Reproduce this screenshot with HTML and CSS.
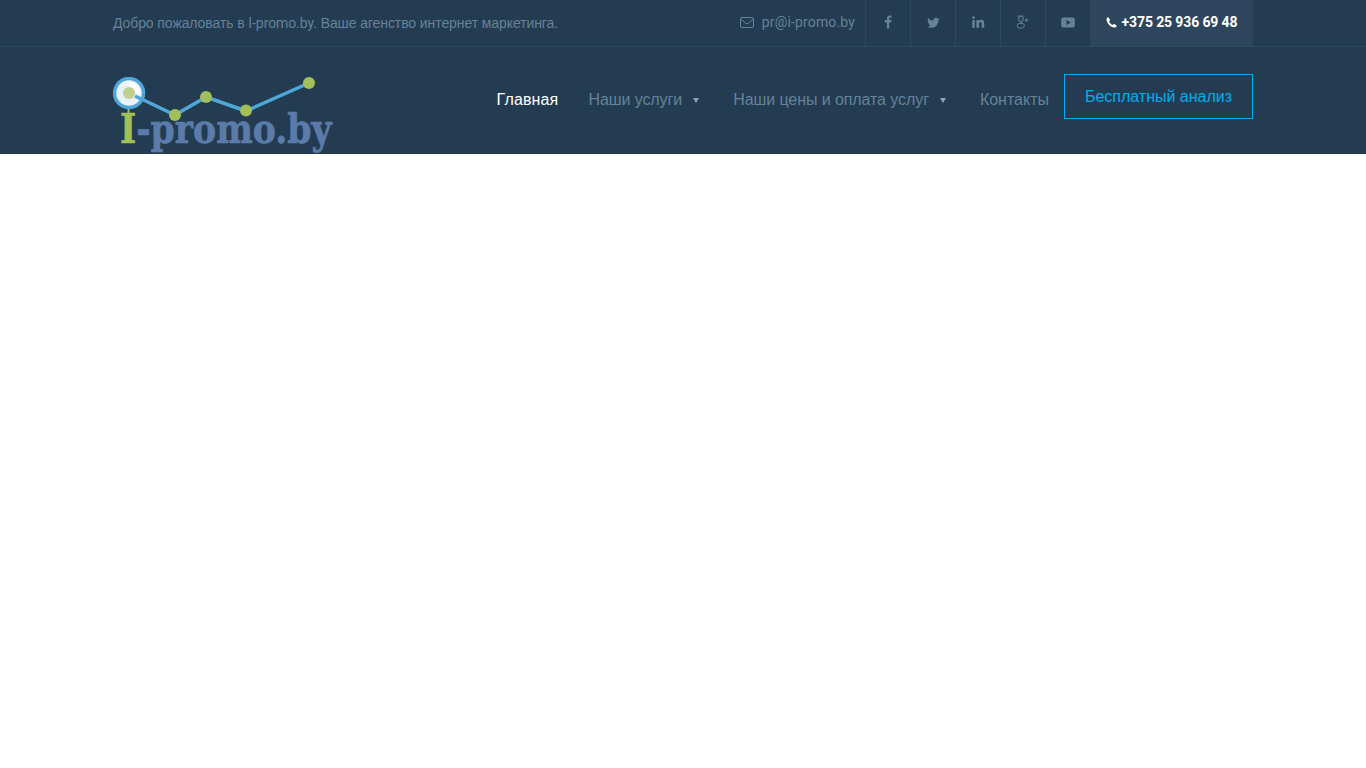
FILE: index.html
```html
<!DOCTYPE html>
<html lang="ru">
<head>
<meta charset="utf-8">
<title>I-promo.by</title>
<link rel="stylesheet" href="styles.css">
</head>
<body>
<header class="site-header">
  <div class="topbar">
    <div class="container topbar-inner">
      <p class="welcome">Добро пожаловать в <span class="latin">I-promo.by.</span> Ваше агенство интернет маркетинга.</p>
      <div class="top-right">
        <a class="mail" href="#">
          <svg class="mail-icon" viewBox="0 0 14 11" width="14" height="11"><rect x="0.5" y="0.5" width="13" height="10" rx="1.5" fill="none" stroke="currentColor"/><path d="M0.8 2.2 L5.6 6.2 Q7 7.3 8.4 6.2 L13.2 2.2" fill="none" stroke="currentColor"/></svg>
          <span>pr@i-promo.by</span>
        </a>
        <a class="social" href="#"><svg viewBox="0 0 8 14" width="8" height="14"><path fill="currentColor" d="M5.2 13.500V7.400h2l.3-2.300H5.200V3.700c0-.6.2-1.100 1.100-1.100h1.300V.6C7.300.5 6.600.5 5.800.5 4.100.5 2.900 1.500 2.900 3.400v1.700H.8v2.300h2.100v6.100z"/></svg></a>
        <a class="social" href="#"><svg viewBox="0 0 14 12" width="13" height="11"><path fill="currentColor" d="M13.800 1.900c-.5.2-1 .4-1.600.4.600-.3 1-.9 1.200-1.500-.5.300-1.100.6-1.800.7C11.100 1 10.400.7 9.600.7 8.100.7 6.800 2 6.800 3.500c0 .2 0 .4.100.6C4.600 4 2.500 2.900 1.100 1.200.9 1.600.7 2.100.7 2.600c0 1 .5 1.800 1.200 2.300-.4 0-.9-.1-1.200-.3v0c0 1.400 1 2.500 2.200 2.800-.2.100-.5.100-.7.100-.2 0-.4 0-.5-.1.300 1.100 1.400 1.900 2.600 2-1 .7-2.100 1.200-3.400 1.200H0c1.200.8 2.700 1.200 4.300 1.200 5.200 0 8-4.300 8-8v-.4c.6-.4 1.100-.9 1.500-1.500z"/></svg></a>
        <a class="social" href="#"><svg viewBox="0 0 13 12" width="13" height="12"><path fill="currentColor" d="M.3 4h2.500v7.700H.3zM1.550.3c.8 0 1.400.6 1.400 1.300s-.6 1.300-1.400 1.300S.15 2.300.15 1.600 .75.300 1.550.3zM4.400 4h2.400v1.100c.4-.7 1.200-1.300 2.400-1.300 2.500 0 3 1.600 3 3.700v4.200H9.700V8c0-.9 0-2-1.200-2s-1.500 1-1.500 1.900v3.800H4.400z"/></svg></a>
        <a class="social" href="#"><svg viewBox="0 0 14 14" width="14" height="14"><g fill="none" stroke="currentColor" stroke-width="1"><ellipse cx="5" cy="4" rx="2.300" ry="3"/><ellipse cx="4.800" cy="10.700" rx="3.700" ry="2.500"/><path d="M5.700 7 Q4 8 6 9"/><path d="M1.600 1.100h5.600M10.500 3.500v3.400M8.800 5.200h3.400"/></g></svg></a>
        <a class="social" href="#"><svg viewBox="0 0 14 11" width="14" height="11"><path fill="currentColor" fill-rule="evenodd" d="M2.200.5h9.600c1.100 0 2 .9 2 2v6c0 1.100-.9 2-2 2H2.200c-1.100 0-2-.9-2-2v-6c0-1.100.9-2 2-2zM5.500 3v5l4.300-2.500z"/></svg></a>
        <a class="phone" href="#">
          <svg viewBox="0 0 12 12" width="11" height="11"><path fill="currentColor" d="M2.700.6 4.300 3c.2.300.2.600-.1.900L3.300 4.800c.7 1.500 2.300 3.200 3.900 3.900l.9-.9c.3-.3.600-.3.900-.1l2.400 1.600c.3.200.4.600.2.900-.5.900-1.300 1.400-2.300 1.300C4.900 11.100.9 7 .6 2.700.5 1.700 1 .9 1.800.4c.3-.2.700-.1.900.2z"/></svg>
          <span>+375 25 936 69 48</span>
        </a>
      </div>
    </div>
  </div>
  <div class="container mainbar">
    <a class="logo" href="#" aria-label="I-promo.by">
      <svg viewBox="0 0 220 76" width="220" height="76">
        <rect x="14.500" y="30" width="2" height="6" fill="#a3bf59"/>
        <text class="logo-text" transform="translate(7 66) scale(.845 1)"><tspan class="logo-i">I</tspan><tspan class="logo-rest">-promo.by</tspan></text>
        <polyline points="16,16 62,38 93,20 133,34 196,6" fill="none" stroke="#4fa6d8" stroke-width="3.500"/>
        <circle cx="16" cy="16" r="14.500" fill="#e9f2f9" stroke="#4fa6d8" stroke-width="3.500"/>
        <path d="M16 5 A11 11 0 0 1 27 16 L22 18 A6 6 0 0 0 16 10z" fill="#fff"/>
        <circle cx="16" cy="16" r="6" fill="#bdd08d"/>
        <line x1="22" y1="19" x2="30" y2="23" stroke="#4fa6d8" stroke-width="3.500"/>
        <circle cx="62" cy="38" r="6" fill="#a3bf59"/>
        <circle cx="93" cy="20" r="6" fill="#a3bf59"/>
        <circle cx="133" cy="33.500" r="6" fill="#a3bf59"/>
        <circle cx="196" cy="6" r="6" fill="#a3bf59"/>
      </svg>
    </a>
    <nav class="nav">
      <a class="nav-link active" href="#">Главная</a>
      <a class="nav-link tight" href="#">Наши услуги<i class="caret"></i></a>
      <a class="nav-link tight" href="#">Наши цены и оплата услуг<i class="caret"></i></a>
      <a class="nav-link" href="#">Контакты</a>
      <a class="cta" href="#">Бесплатный анализ</a>
    </nav>
  </div>
</header>
</body>
</html>
```
FILE: styles.css
```css
* { box-sizing: border-box; }
html, body { margin: 0; padding: 0; background: #fff; }
body { font-family: "Liberation Sans", Arial, sans-serif; height: 768px; overflow: hidden; }
a { text-decoration: none; color: inherit; }

.site-header { background: #243c51; height: 154px; }
.container { width: 1140px; margin-left: 113px; }

.topbar { height: 47px; border-bottom: 1px solid #2b4a60; }
.topbar-inner { display: flex; justify-content: space-between; height: 46px; }
.welcome { margin: 0; font: 14px/46px "Liberation Sans", sans-serif; letter-spacing: -.09px; color: #658299; }
.latin { font-family: Roboto, sans-serif; }
.top-right { display: flex; height: 46px; }

.mail { display: flex; align-items: center; gap: 8px; padding-right: 10px; padding-bottom: 2px; font: 14px Roboto, sans-serif; letter-spacing: .15px; color: #658299; }

.social { width: 45px; display: flex; align-items: center; justify-content: center; border-left: 1px solid #2b4a60; color: #658299; padding-bottom: 2px; }

.phone { width: 163px; display: flex; align-items: center; justify-content: center; gap: 5px; background: #2d465d; color: #fff; font: 700 14px Roboto, sans-serif; letter-spacing: -.12px; padding-bottom: 2px; }

.mainbar { display: flex; justify-content: space-between; height: 107px; }
.logo { display: block; margin-top: 30px; height: 76px; }
.logo-text { font: 700 41px "DejaVu Serif", serif; stroke-width: .7px; }
.logo-i { fill: #a3bf59; stroke: #a3bf59; }
.logo-rest { fill: #5b7cab; stroke: #5b7cab; }

.nav { display: flex; align-items: flex-start; }
.nav-link { display: flex; align-items: center; height: 20px; margin-top: 43px; margin-right: 30px; font-size: 16px; line-height: 20px; color: #658299; }
.nav-link:nth-child(4) { margin-right: 15px; }
.nav-link.active { color: #fff; letter-spacing: .14px; }
.nav-link.tight { letter-spacing: -.08px; }
.caret { display: block; width: 0; height: 0; margin-left: 11px; margin-right: 4px; margin-top: 1px; border-left: 3.500px solid transparent; border-right: 3.500px solid transparent; border-top: 5px solid #8ba2b5; }
.cta { display: flex; align-items: center; justify-content: center; width: 189px; height: 45px; margin-top: 27px; padding-top: 1px; border: 1px solid #00aeef; font-size: 16px; color: #00aeef; }
```
